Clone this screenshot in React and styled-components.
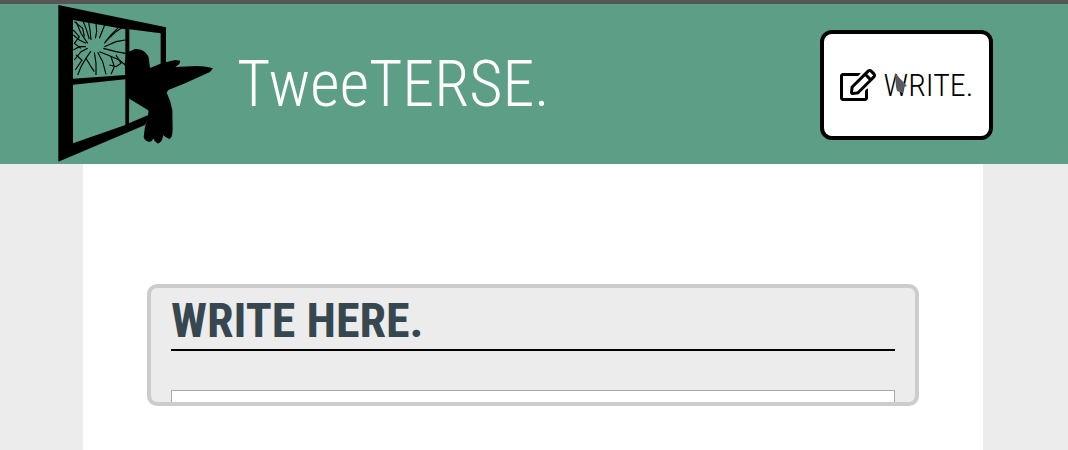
import React from "react";
import styled, { createGlobalStyle } from "styled-components";
import { FaRegEdit } from "react-icons/fa";

const Global = createGlobalStyle`
  html, body { margin: 0; padding: 0; background: #ececec; overflow: hidden; }
  body { font-family: Roboto, "Liberation Sans", sans-serif; }
`;

const TopEdge = styled.div`
  height: 4px;
  background: #565656;
`;

const Header = styled.header`
  height: 160px;
  display: flex;
  align-items: center;
  padding: 0 75px 0 57px;
  background: #5d9e87;
`;

const Logo = styled.svg`
  width: 160px;
  height: 160px;
  flex: none;
`;

const Title = styled.h1`
  margin: 0 0 0 20px;
  font-size: 64px;
  font-weight: 300;
  font-stretch: 75%;
  color: #fff;
`;

const WriteButton = styled.button`
  position: relative;
  width: 173px;
  height: 110px;
  margin-left: auto;
  margin-top: 2px;
  display: flex;
  align-items: center;
  justify-content: center;
  gap: 8px;
  background: #fff;
  border: 4px solid #000;
  border-radius: 12px;
  font-family: inherit;
  font-size: 32px;
  font-weight: 300;
  font-stretch: 75%;
  color: #000;
  padding: 0;
`;

const Cursor = styled.svg`
  position: absolute;
  left: 71px;
  top: 39px;
  width: 14px;
  height: 21px;
`;

const Main = styled.main`
  width: 900px;
  height: 286px;
  margin-left: 83px;
  padding: 120px 64px 0;
  box-sizing: border-box;
  background: #fff;
`;

const Card = styled.section`
  height: 122px;
  box-sizing: border-box;
  padding: 0 20px;
  overflow: hidden;
  background: #ececec;
  border: 4px solid #ccc;
  border-radius: 10px;
`;

const Heading = styled.h2`
  margin: 0;
  height: 61px;
  line-height: 66px;
  font-size: 48px;
  font-weight: 700;
  font-stretch: 75%;
  color: #36474f;
  border-bottom: 2px solid #000;
`;

const Input = styled.textarea`
  display: block;
  width: 100%;
  height: 100px;
  margin-top: 39px;
  box-sizing: border-box;
  border: 1px solid #aaa;
  background: #fff;
  padding: 0;
  resize: none;
`;

const cracks = [
  "M65 85 L45 55 L30 20",
  "M70 72 L60 40 L50 15",
  "M75 75 L72 45 L68 22",
  "M88 70 L92 50 L90 24",
  "M100 70 L110 45 L118 25",
  "M115 85 L135 60 L160 35",
  "M118 80 L150 50 L176 32",
  "M115 95 L150 80 L178 75",
  "M112 100 L150 110 L178 115",
  "M100 110 L125 120 L160 135 L178 150",
  "M95 112 L110 140 L120 178",
  "M85 112 L90 145 L90 180",
  "M75 108 L60 130 L45 155 L35 180",
  "M60 130 L75 155 L85 170",
  "M65 100 L45 110 L25 135",
  "M60 95 L40 95 L22 105",
  "M60 85 L40 75 L22 60",
  "M22 45 L40 65 L25 85 L45 100",
  "M25 20 L50 40 L55 65",
  "M130 150 L150 155 L165 145 L150 120",
  "M135 125 L145 155 L135 178",
  "M30 120 L48 135 L28 165",
];

const LogoMark = () => (
  <Logo viewBox="51 12 480 480" aria-hidden="true">
    <path
      fillRule="evenodd"
      d="M55 15 L378 82 L378 220 L330 345 L315 375 L55 485 Z
         M99 60 L256 88 L256 225 L99 236 Z
         M268 88 L362 100 L362 230 L268 240 Z
         M99 254 L256 238 L256 375 L99 430 Z
         M268 240 L330 240 L325 345 L267 370 Z"
    />
    <g transform="translate(78 45)" fill="none" stroke="#000" strokeWidth="3.4">
      {cracks.map((d) => (
        <path key={d} d={d} />
      ))}
    </g>
    <path
      transform="translate(240 120)"
      d="M45 27 C64 26 80 36 86 52 L90 84 L125 70 L165 60 L181 62 L178 72 L166 81 L230 78 Q262 79 279 85 L270 96 L235 112 L190 132 L145 150 L140 158 L150 182 L157 210 L158 265 Q158 295 148 297 Q135 292 130 285 Q125 312 112 310 Q102 305 100 295 Q95 308 85 305 Q72 300 71 290 L75 260 L84 232 L87 212 L60 196 L28 176 L18 130 L14 70 L20 38 Z"
    />
  </Logo>
);

export default function App() {
  return (
    <>
      <Global />
      <TopEdge />
      <Header>
        <LogoMark />
        <Title>TweeTERSE.</Title>
        <WriteButton>
          <FaRegEdit size={36} />
          WRITE.
          <Cursor viewBox="0 0 14 21" aria-hidden="true">
            <path d="M0 0 L12 13 L9 14 L8 20 L2 18 L1 14 Z" fill="#5a5a5a" />
          </Cursor>
        </WriteButton>
      </Header>
      <Main>
        <Card>
          <Heading>WRITE HERE.</Heading>
          <Input />
        </Card>
      </Main>
    </>
  );
}
